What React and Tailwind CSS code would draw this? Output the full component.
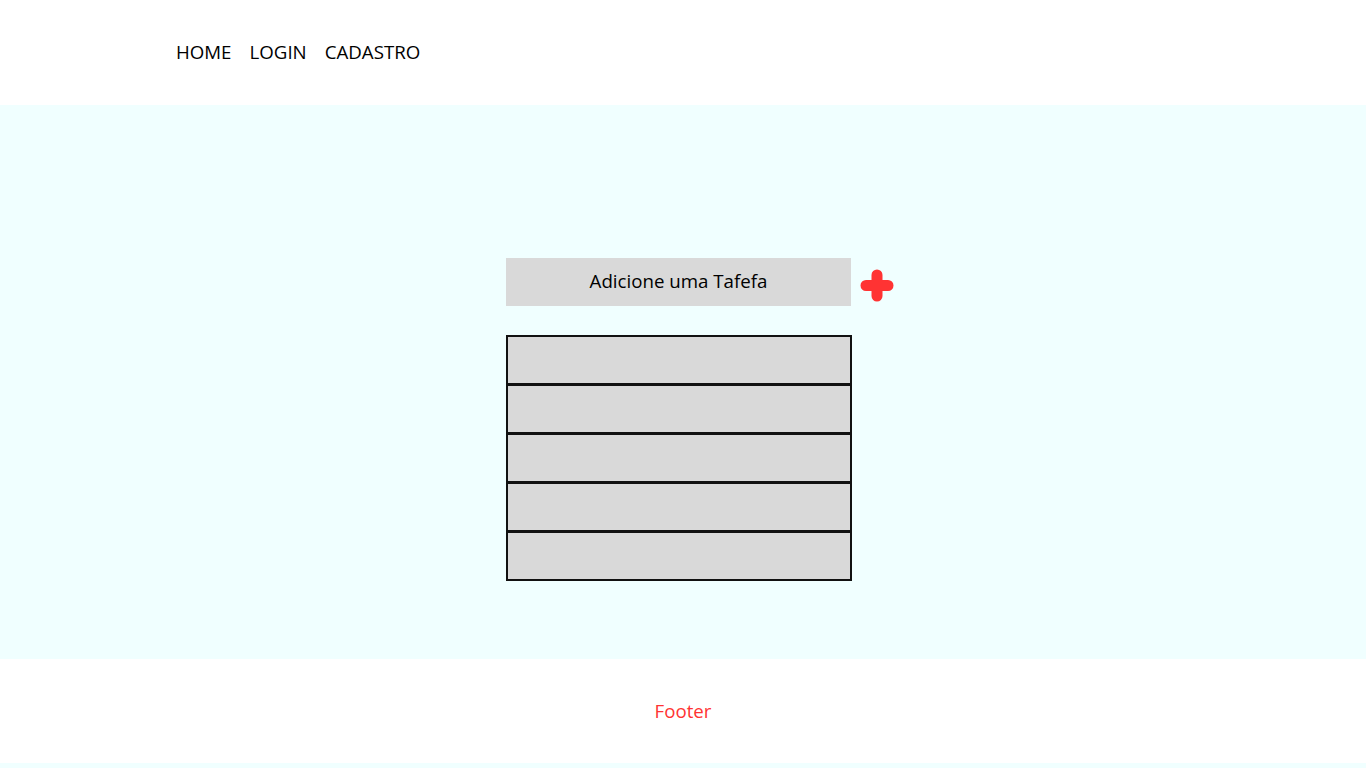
import React from "react";

const PlusIcon = () => (
  <svg width="34" height="33" viewBox="0 0 34 33" fill="none">
    <path d="M17 6 V27 M6 16.5 H28" stroke="#ff3333" strokeWidth="11" strokeLinecap="round" />
  </svg>
);

export default function App() {
  const tasks = [1, 2, 3, 4, 5];

  return (
    <div className="min-h-screen bg-[#f0ffff]" style={{ fontFamily: '"Open Sans", sans-serif' }}>
      {/* Header */}
      <header className="h-[105px] bg-white flex items-center pl-[176px] gap-[18px] text-[18.7px] text-black">
        <a href="#">HOME</a>
        <a href="#">LOGIN</a>
        <a href="#">CADASTRO</a>
      </header>

      {/* Main */}
      <main className="h-[554px] bg-[#f0ffff] pt-[153px] pl-[506px]">
        <div className="flex items-center">
          <div className="w-[345px] h-[48px] pb-[2px] bg-[#d9d9d9] flex items-center justify-center text-[18.7px] text-black">
            Adicione uma Tafefa
          </div>
          <div className="ml-[9px] mt-[6px]">
            <PlusIcon />
          </div>
        </div>

        <div className="mt-[29px] w-[346px] flex flex-col">
          {tasks.map((t) => (
            <div key={t} className="h-[50px] bg-[#d9d9d9] border-2 border-[#111] -mt-px first:mt-0" />
          ))}
        </div>
      </main>

      {/* Footer */}
      <footer className="h-[104px] bg-white flex items-center justify-center text-[18.7px] text-[#ff3333]">
        Footer
      </footer>
    </div>
  );
}
